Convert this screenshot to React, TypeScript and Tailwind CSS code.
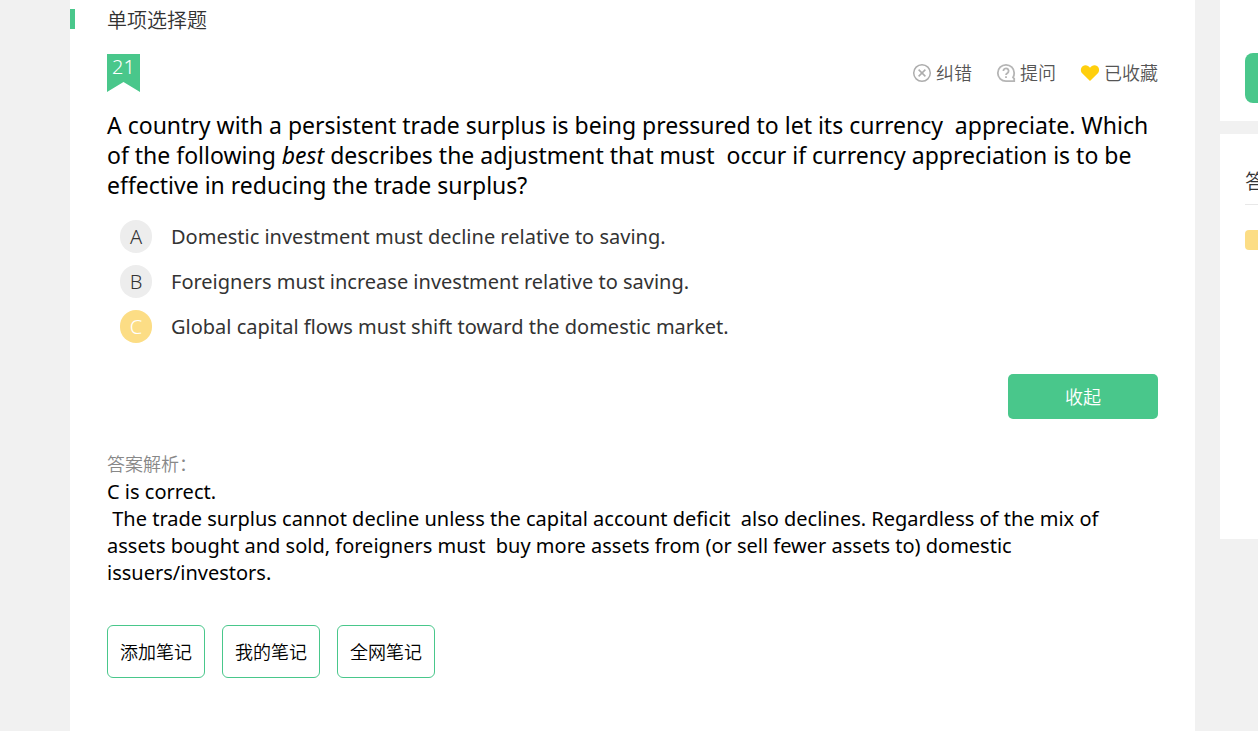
import { useState } from 'react'

interface Option {
  key: string
  text: string
}

const OPTIONS: Option[] = [
  { key: 'A', text: 'Domestic investment must decline relative to saving.' },
  { key: 'B', text: 'Foreigners must increase investment relative to saving.' },
  { key: 'C', text: 'Global capital flows must shift toward the domestic market.' },
]

const NOTE_ACTIONS = ['添加笔记', '我的笔记', '全网笔记']

function ErrorIcon() {
  return (
    <svg width="20" height="20" viewBox="0 0 20 20" fill="none" stroke="#adadad" strokeWidth="1.5" aria-hidden="true">
      <circle cx="10" cy="10" r="8.3" />
      <path d="M6.6 6.6l6.8 6.8M13.4 6.6l-6.8 6.8" />
    </svg>
  )
}

function AskIcon() {
  return (
    <svg width="20" height="20" viewBox="0 0 20 20" fill="none" stroke="#b5b5b5" strokeWidth="1.8" aria-hidden="true">
      <path d="M18.2 10A8.2 8.2 0 1 0 10 18.200H18.200V15.600L17 14.400A8.200 8.200 0 0 0 18.200 10Z" />
      <path d="M7.400 8a2.600 2.600 0 1 1 4.200 2c-1 .7-1.600 1.100-1.600 2M10 13.200v1.800" />
    </svg>
  )
}

function HeartIcon() {
  return (
    <svg width="20" height="20" viewBox="0 0 20 20" fill="#ffcf0d" aria-hidden="true">
      <path d="M10 18L2.400 10.600C.2 8.300.5 5 2.600 3.300 5 1.500 8.300 2.200 10 4.800 11.700 2.200 15 1.500 17.400 3.300 19.500 5 19.800 8.300 17.600 10.600Z" />
    </svg>
  )
}

function QuestionHeader() {
  return (
    <div className="flex items-start justify-between">
      <div className="h-[38px] w-[33px] bg-[#49c78b] text-center text-xl leading-[26px] font-light text-white [clip-path:polygon(0_0,100%_0,100%_100%,50%_74%,0_100%)]">
        21
      </div>
      <div className="flex gap-6 pt-[5px] text-lg font-[350] text-[#555]">
        <button className="flex items-center gap-1">
          <ErrorIcon />
          纠错
        </button>
        <button className="flex items-center gap-1">
          <AskIcon />
          提问
        </button>
        <button className="flex items-center gap-1">
          <HeartIcon />
          已收藏
        </button>
      </div>
    </div>
  )
}

function OptionList() {
  const [selected, setSelected] = useState('C')

  return (
    <div role="radiogroup" className="mt-5 flex flex-col gap-3 pl-[13px]">
      {OPTIONS.map((option) => (
        <label key={option.key} className="relative flex h-[33px] cursor-pointer items-center text-xl text-[#333]">
          <input
            type="radio"
            name="answer"
            value={option.key}
            checked={selected === option.key}
            onChange={() => setSelected(option.key)}
            className="peer sr-only"
          />
          <span className="flex h-[33px] w-8 items-center justify-center rounded-full bg-[#ededed] font-light peer-checked:bg-[#fcdd85] peer-checked:text-white">
            {option.key}
          </span>
          <span className="ml-[19px]">{option.text}</span>
        </label>
      ))}
    </div>
  )
}

function Sidebar() {
  return (
    <aside className="w-[38px] shrink-0 overflow-hidden">
      <div className="h-[121px] bg-white pt-[53px] pl-[25px]">
        <button aria-label="交卷" className="block h-[50px] w-[200px] rounded-lg bg-[#49c78b]" />
      </div>
      <div className="mt-[13px] h-[405px] bg-white pt-[34px] pl-[25px]">
        <h2 className="h-[37px] w-[200px] border-b border-[#e8e8e8] text-xl font-[350] text-[#333]">答题卡</h2>
        <div className="mt-[25px] h-5 w-8 rounded bg-[#fcdd85]" />
      </div>
    </aside>
  )
}

export default function App() {
  return (
    <div className="flex min-h-screen gap-[25px] bg-[#f1f1f1] pl-[70px] font-['Noto_Sans','Noto_Sans_CJK_SC',sans-serif]">
      <main className="min-w-0 flex-1 bg-white">
        <div className="flex items-start pt-[9px]">
          <span className="h-5 w-[5px] bg-[#49c78b]" />
          <h1 className="ml-8 text-xl leading-6 font-[350] text-[#333]">单项选择题</h1>
        </div>

        <div className="px-[37px] pt-[21px] pb-12">
          <QuestionHeader />

          <p className="mt-[18px] text-[23px] leading-[30px] whitespace-pre-wrap text-black">
            {'A country with a persistent trade surplus is being pressured to let its currency  appreciate. Which of the following '}
            <em>best</em>
            {' describes the adjustment that must  occur if currency appreciation is to be effective in reducing the trade surplus?'}
          </p>

          <OptionList />

          <div className="mt-[31px] flex justify-end">
            <button className="h-[45px] w-[150px] rounded-[5px] bg-[#49c78b] text-lg font-[350] text-white">收起</button>
          </div>

          <h2 className="mt-[31px] text-lg font-[350] text-[#888]">答案解析：</h2>
          <p className="text-xl leading-[27px] whitespace-pre-wrap text-black">
            {'C is correct.\n The trade surplus cannot decline unless the capital account deficit  also declines. Regardless of the mix of assets bought and sold, foreigners must  buy more assets from (or sell fewer assets to) domestic issuers/investors.'}
          </p>

          <div className="mt-[39px] flex gap-[17px]">
            {NOTE_ACTIONS.map((label) => (
              <button key={label} className="h-[53px] w-[98px] rounded-md border border-[#49c78b] text-lg font-[350] text-black">
                {label}
              </button>
            ))}
          </div>
        </div>
      </main>

      <Sidebar />
    </div>
  )
}
